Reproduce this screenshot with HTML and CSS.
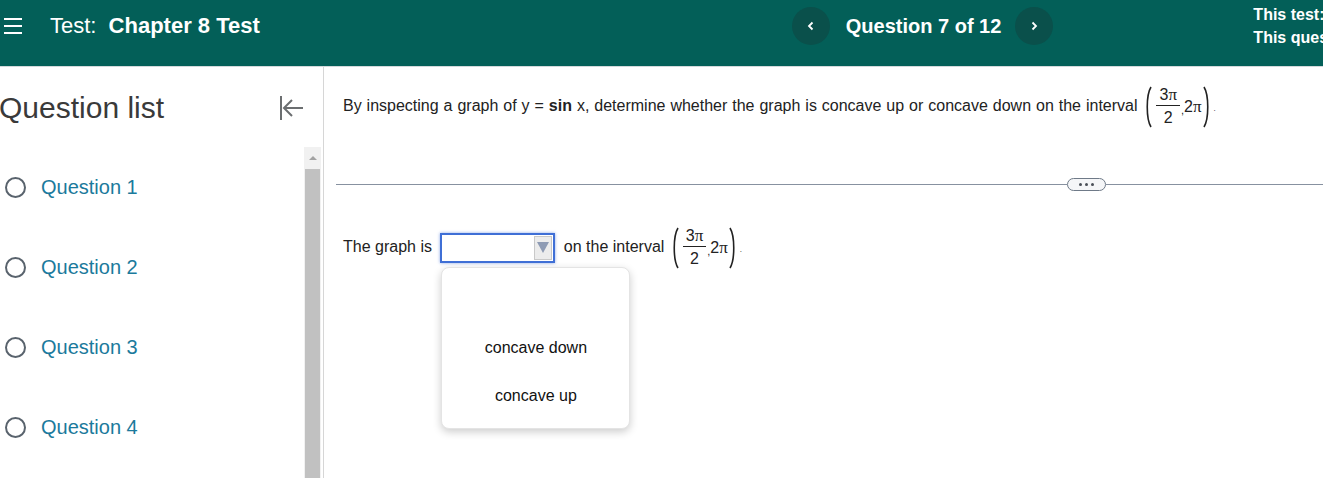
FILE: index.html
```html
<!DOCTYPE html>
<html>
  <head>
    <title>Test: Chapter 8 Test</title>
    <link rel="stylesheet" href="styles.css">
  </head>
  <body>
    <div class="header">
      <svg class="menu-icon" width="20" height="18" viewBox="0 0 20 18">
        <path d="M1 2h18M1 9h18M1 16h18" stroke="#fff" stroke-width="2" />
      </svg>
      <div class="test-title">Test: <b>Chapter 8 Test</b></div>
      <div class="nav">
        <div class="nav-button">
          <svg width="10" height="12" viewBox="0 0 10 12"><path d="M6.5 2.5 3 6l3.5 3.5" fill="none" stroke="#fff" stroke-width="1.8" /></svg>
        </div>
        <div class="nav-label">Question 7 of 12</div>
        <div class="nav-button">
          <svg width="10" height="12" viewBox="0 0 10 12"><path d="M3.5 2.5 7 6l-3.5 3.5" fill="none" stroke="#fff" stroke-width="1.8" /></svg>
        </div>
      </div>
      <div class="points">
        <div>This test: 12 point(s) possible</div>
        <div>This question: 1 point(s) possible</div>
      </div>
    </div>

    <div class="layout">
      <div class="sidebar">
        <div class="sidebar-head">
          <div class="sidebar-title">Question list</div>
          <svg class="collapse-icon" width="24" height="26" viewBox="0 0 24 26">
            <path d="M2 1v24M5 13h19M13 5l-8 8 8 8" fill="none" stroke="#6b6e70" stroke-width="2" />
          </svg>
        </div>
        <div class="list-wrap">
          <ul class="question-list">
            <li><span class="radio"></span>Question 1</li>
            <li><span class="radio"></span>Question 2</li>
            <li><span class="radio"></span>Question 3</li>
            <li><span class="radio"></span>Question 4</li>
          </ul>
          <div class="scrollbar">
            <div class="scroll-arrow"></div>
            <div class="scroll-thumb"></div>
          </div>
        </div>
      </div>

      <div class="main">
        <div class="question">
          By inspecting a graph of y = <b>sin</b> x, determine whether the graph is concave up or concave down on the interval
          <span class="interval"><svg class="paren" width="9" height="44" viewBox="0 0 9 44"><path d="M7 2C2 10 2 34 7 42" fill="none" stroke="#222" stroke-width="1.6" /></svg><span class="frac"><span class="num">3<span class="pi">π</span></span><span class="den">2</span></span><span class="comma">,</span><span>2<span class="pi">π</span></span><svg class="paren" width="9" height="44" viewBox="0 0 9 44"><path d="M2 2C7 10 7 34 2 42" fill="none" stroke="#222" stroke-width="1.6" /></svg></span><span class="dot">.</span>
        </div>

        <div class="divider">
          <span class="more"><i></i><i></i><i></i></span>
        </div>

        <div class="answer">
          The graph is
          <span class="select">
            <span class="select-arrow"></span>
            <div class="dropdown">
              <div class="option"></div>
              <div class="option">concave down</div>
              <div class="option">concave up</div>
            </div>
          </span>
          on the interval
          <span class="interval"><svg class="paren" width="9" height="44" viewBox="0 0 9 44"><path d="M7 2C2 10 2 34 7 42" fill="none" stroke="#222" stroke-width="1.6" /></svg><span class="frac"><span class="num">3<span class="pi">π</span></span><span class="den">2</span></span><span class="comma">,</span><span>2<span class="pi">π</span></span><svg class="paren" width="9" height="44" viewBox="0 0 9 44"><path d="M2 2C7 10 7 34 2 42" fill="none" stroke="#222" stroke-width="1.6" /></svg></span><span class="dot">.</span>
        </div>
      </div>
    </div>
  </body>
</html>
```

FILE: styles.css
```css
body {
  font-family: "Liberation Sans", Arial, sans-serif;
  margin: 0;
  padding: 0;
  overflow: hidden;
  background-color: #fff;
  color: #222;
}
.header {
  display: flex;
  align-items: center;
  height: 66px;
  background-color: #035f58;
  border-bottom: 1px solid #d3d9db;
  color: #fff;
  white-space: nowrap;
}
.header > * {
  flex-shrink: 0;
}
.menu-icon {
  margin-left: 3px;
  margin-top: -15px;
}
.test-title {
  margin-left: 27px;
  font-size: 22px;
  margin-top: -14px;
}
.test-title b {
  margin-left: 6px;
}
.nav {
  display: flex;
  align-items: center;
  margin-left: 532px;
  margin-top: -14px;
}
.nav-button {
  display: flex;
  align-items: center;
  justify-content: center;
  width: 38px;
  height: 38px;
  border-radius: 50%;
  background-color: #0a504b;
}
.nav-label {
  font-size: 20px;
  font-weight: bold;
  margin: 0 14px 0 16px;
}
.points {
  margin-left: 200px;
  font-size: 16px;
  font-weight: bold;
  line-height: 23px;
  margin-top: -15px;
}
.layout {
  display: flex;
  height: 411px;
}
.sidebar {
  width: 323px;
  flex-shrink: 0;
  border-right: 1px solid #d6d6d6;
  display: flex;
  flex-direction: column;
}
.sidebar-head {
  display: flex;
  align-items: center;
  justify-content: space-between;
  height: 80px;
  padding-right: 20px;
}
.sidebar-title {
  font-size: 30px;
  color: #3a3a3a;
  margin-left: -1px;
  margin-top: 2px;
}
.collapse-icon {
  margin-top: 2px;
}
.list-wrap {
  display: flex;
  flex: 1;
  min-height: 0;
}
.question-list {
  list-style: none;
  margin: 0;
  padding: 0;
  flex: 1;
}
.question-list li {
  display: flex;
  align-items: center;
  height: 80px;
  font-size: 20px;
  color: #1b7a9c;
}
.radio {
  width: 17px;
  height: 17px;
  border: 2px solid #59636d;
  border-radius: 50%;
  margin: 0 15px 0 5px;
}
.scrollbar {
  width: 17px;
  margin-right: 2px;
  background-color: #f1f1f1;
  display: flex;
  flex-direction: column;
}
.scroll-arrow {
  height: 22px;
  position: relative;
}
.scroll-arrow::after {
  content: "";
  position: absolute;
  left: 5px;
  top: 9px;
  border-left: 4px solid transparent;
  border-right: 4px solid transparent;
  border-bottom: 4px solid #a3a3a3;
}
.scroll-thumb {
  flex: 1;
  margin: 0 1px;
  background-color: #c1c1c1;
}
.main {
  flex: 1;
  min-width: 0;
  padding: 17px 0 0 12px;
  font-size: 16px;
}
.question,
.answer {
  height: 44px;
  line-height: 44px;
  padding-left: 7px;
  white-space: nowrap;
}
.question {
  word-spacing: 0.5px;
}
.interval {
  display: inline-flex;
  align-items: center;
  vertical-align: middle;
  height: 44px;
  line-height: 20px;
  margin-left: 2px;
}
.paren {
  display: block;
}
.pi {
  font-family: "Liberation Serif", "Times New Roman", serif;
  font-size: 17px;
}
.frac {
  display: inline-flex;
  flex-direction: column;
  align-items: center;
  margin: 0 1px 0 3px;
  line-height: 20px;
}
.num {
  border-bottom: 1px solid #222;
  padding: 0 3px;
  margin-bottom: 2px;
}
.comma {
  font-size: 11px;
  margin-top: 6px;
}
.dot {
  font-size: 8px;
  margin-left: 3px;
}
.divider {
  display: flex;
  align-items: center;
  height: 14px;
  margin-top: 49px;
}
.divider::before,
.divider::after {
  content: "";
  height: 1px;
  background-color: #8791a0;
}
.divider::before {
  width: 731px;
}
.divider::after {
  flex: 1;
}
.more {
  display: flex;
  align-items: center;
  justify-content: center;
  gap: 3px;
  width: 37px;
  height: 11px;
  border: 1px solid #6f7a88;
  border-radius: 7px;
  background-color: #f5f6f8;
}
.more i {
  width: 3px;
  height: 3px;
  border-radius: 50%;
  background-color: #4a4f57;
}
.answer {
  margin-top: 34px;
}
.select {
  position: relative;
  display: inline-block;
  vertical-align: middle;
  width: 111px;
  height: 26px;
  margin: 0 4px;
  border: 2px solid #3f6fd6;
  box-shadow: 0 0 3px rgba(63, 111, 214, 0.6);
  background-color: #fff;
  line-height: normal;
}
.select-arrow {
  position: absolute;
  right: 1px;
  top: 1px;
  width: 16px;
  height: 22px;
  border: 1px solid #c9c9c9;
  background-color: #ececec;
}
.select-arrow::after {
  content: "";
  position: absolute;
  left: 2px;
  top: 5px;
  border-left: 6px solid transparent;
  border-right: 6px solid transparent;
  border-top: 11px solid #8e9bb4;
}
.dropdown {
  position: absolute;
  left: -1px;
  top: 32px;
  width: 187px;
  padding: 8px 0;
  background-color: #fff;
  border: 1px solid #e4e4e4;
  border-radius: 8px;
  box-shadow: 0 3px 8px rgba(0, 0, 0, 0.2);
  z-index: 2;
}
.option {
  height: 48px;
  line-height: 48px;
  text-align: center;
  color: #111;
}
```
